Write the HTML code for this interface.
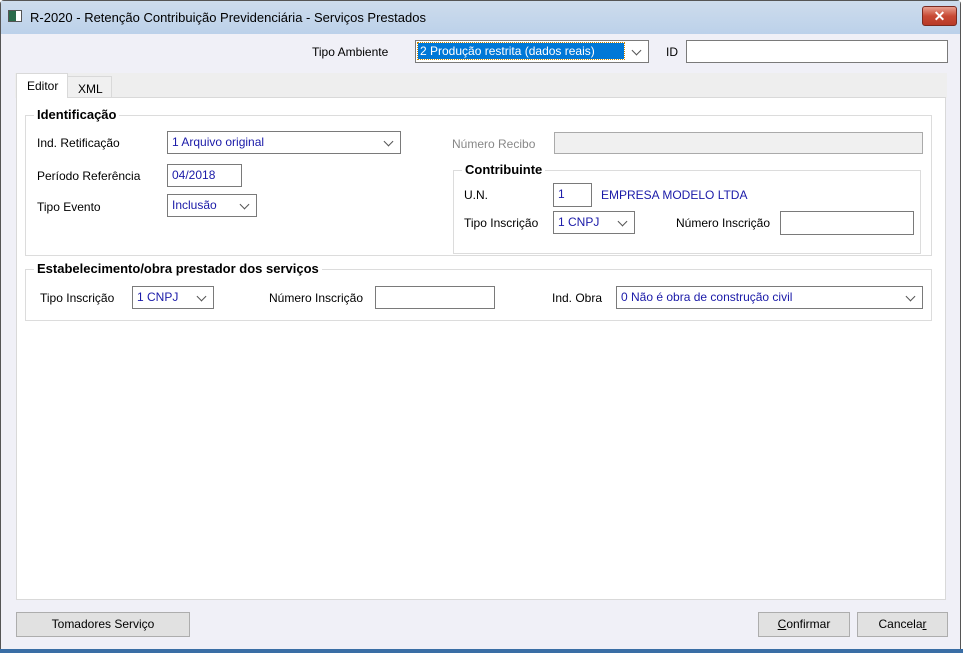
<!DOCTYPE html>
<html><head><meta charset="utf-8"><style>
*{box-sizing:border-box;margin:0;padding:0}
body{width:963px;height:653px;overflow:hidden;background:#fff;font-family:"Liberation Sans",sans-serif;font-size:12px;color:#000;position:relative}
.a{position:absolute}
.win{left:0;top:0;width:961px;height:651px;border:1px solid #555;border-radius:4px 4px 0 0;background:#f0f0f7}
.title{left:1px;top:1px;width:959px;height:33px;background:linear-gradient(#cddcec,#bcd1ea);}
.inp{position:absolute;background:#fff;border:1px solid #7a7a7a;height:23px;line-height:21px;padding-left:4px;color:#1a1aa8}
.cb::after{content:"";position:absolute;right:8px;top:6px;width:6px;height:6px;border-right:1px solid #555;border-bottom:1px solid #555;transform:rotate(45deg)}
.grp{position:absolute;border:1px solid #dcdcdc}
.gt{position:absolute;top:-9px;left:8px;background:#fff;padding:0 3px;font-weight:bold;font-size:13px}
.lbl{position:absolute;line-height:14px}
.btn{position:absolute;border:1px solid #adadad;background:#e1e1e1;text-align:center;line-height:23px;height:25px}
</style></head><body>
<div class="a win"></div>
<div class="a title"></div>
<div class="a" style="left:8px;top:10px;width:14px;height:12px;border:1px solid #555;background:linear-gradient(90deg,#2a6a4a 60%,#fff 60%)"></div>
<div class="a" style="left:30px;top:10px;font-size:13px">R-2020 - Retenção Contribuição Previdenciária - Serviços Prestados</div>
<div class="a" style="left:922px;top:6px;width:35px;height:20px;border:1px solid #7a2a20;border-radius:3px;background:linear-gradient(#e8a090,#c84a35 50%,#b83a28);color:#fff;font-weight:bold;text-align:center;line-height:18px;font-size:14px">✕</div>

<div class="lbl" style="left:312px;top:45px">Tipo Ambiente</div>
<div class="inp cb" style="left:415px;top:40px;width:234px;color:#fff"><span style="background:#0078d7;outline:1px dotted #c80;padding:0 2px;display:inline-block;line-height:16px;width:206px;margin-left:-2px">2 Produção restrita (dados reais)</span></div>
<div class="lbl" style="left:666px;top:45px">ID</div>
<div class="inp" style="left:686px;top:40px;width:262px"></div>

<div class="a" style="left:15px;top:73px;width:932px;height:25px;background:#eeeeee"></div>
<div class="a" style="left:16px;top:97px;width:930px;height:503px;background:#fff;border:1px solid #d9d9d9"></div>
<div class="a" style="left:16px;top:73px;width:52px;height:25px;background:#fff;border:1px solid #d9d9d9;border-bottom:none;padding:5px 0 0 10px">Editor</div>
<div class="a" style="left:67px;top:76px;width:45px;height:21px;background:#f0f0f0;border:1px solid #d9d9d9;border-bottom:none;padding:5px 0 0 10px">XML</div>

<div class="grp" style="left:25px;top:115px;width:907px;height:141px"><div class="gt">Identificação</div></div>
<div class="lbl" style="left:37px;top:136px">Ind. Retificação</div>
<div class="inp cb" style="left:167px;top:131px;width:234px">1 Arquivo original</div>
<div class="lbl" style="left:37px;top:169px">Período Referência</div>
<div class="inp" style="left:167px;top:164px;width:75px">04/2018</div>
<div class="lbl" style="left:37px;top:200px">Tipo Evento</div>
<div class="inp cb" style="left:167px;top:194px;width:90px">Inclusão</div>
<div class="lbl" style="left:452px;top:137px;color:#888">Número Recibo</div>
<div class="inp" style="left:554px;top:132px;width:369px;height:22px;background:#f0f0f0;border-color:#aaa"></div>

<div class="grp" style="left:453px;top:170px;width:468px;height:84px"><div class="gt">Contribuinte</div></div>
<div class="lbl" style="left:464px;top:188px">U.N.</div>
<div class="inp" style="left:553px;top:183px;width:39px;height:24px">1</div>
<div class="lbl" style="left:601px;top:188px;color:#1a1aa8">EMPRESA MODELO LTDA</div>
<div class="lbl" style="left:464px;top:216px">Tipo Inscrição</div>
<div class="inp cb" style="left:553px;top:211px;width:82px">1 CNPJ</div>
<div class="lbl" style="left:676px;top:216px">Número Inscrição</div>
<div class="inp" style="left:780px;top:211px;width:134px;height:24px"></div>

<div class="grp" style="left:25px;top:269px;width:907px;height:52px"><div class="gt">Estabelecimento/obra prestador dos serviços</div></div>
<div class="lbl" style="left:40px;top:291px">Tipo Inscrição</div>
<div class="inp cb" style="left:132px;top:286px;width:82px">1 CNPJ</div>
<div class="lbl" style="left:269px;top:291px">Número Inscrição</div>
<div class="inp" style="left:375px;top:286px;width:120px"></div>
<div class="lbl" style="left:552px;top:291px">Ind. Obra</div>
<div class="inp cb" style="left:616px;top:286px;width:307px">0 Não é obra de construção civil</div>

<div class="btn" style="left:16px;top:612px;width:174px">Tomadores Serviço</div>
<div class="btn" style="left:758px;top:612px;width:92px"><u>C</u>onfirmar</div>
<div class="btn" style="left:857px;top:612px;width:91px">Cancela<u>r</u></div>
<div class="a" style="left:0;top:649px;width:963px;height:4px;background:#3a6ea5"></div>
</body></html>
